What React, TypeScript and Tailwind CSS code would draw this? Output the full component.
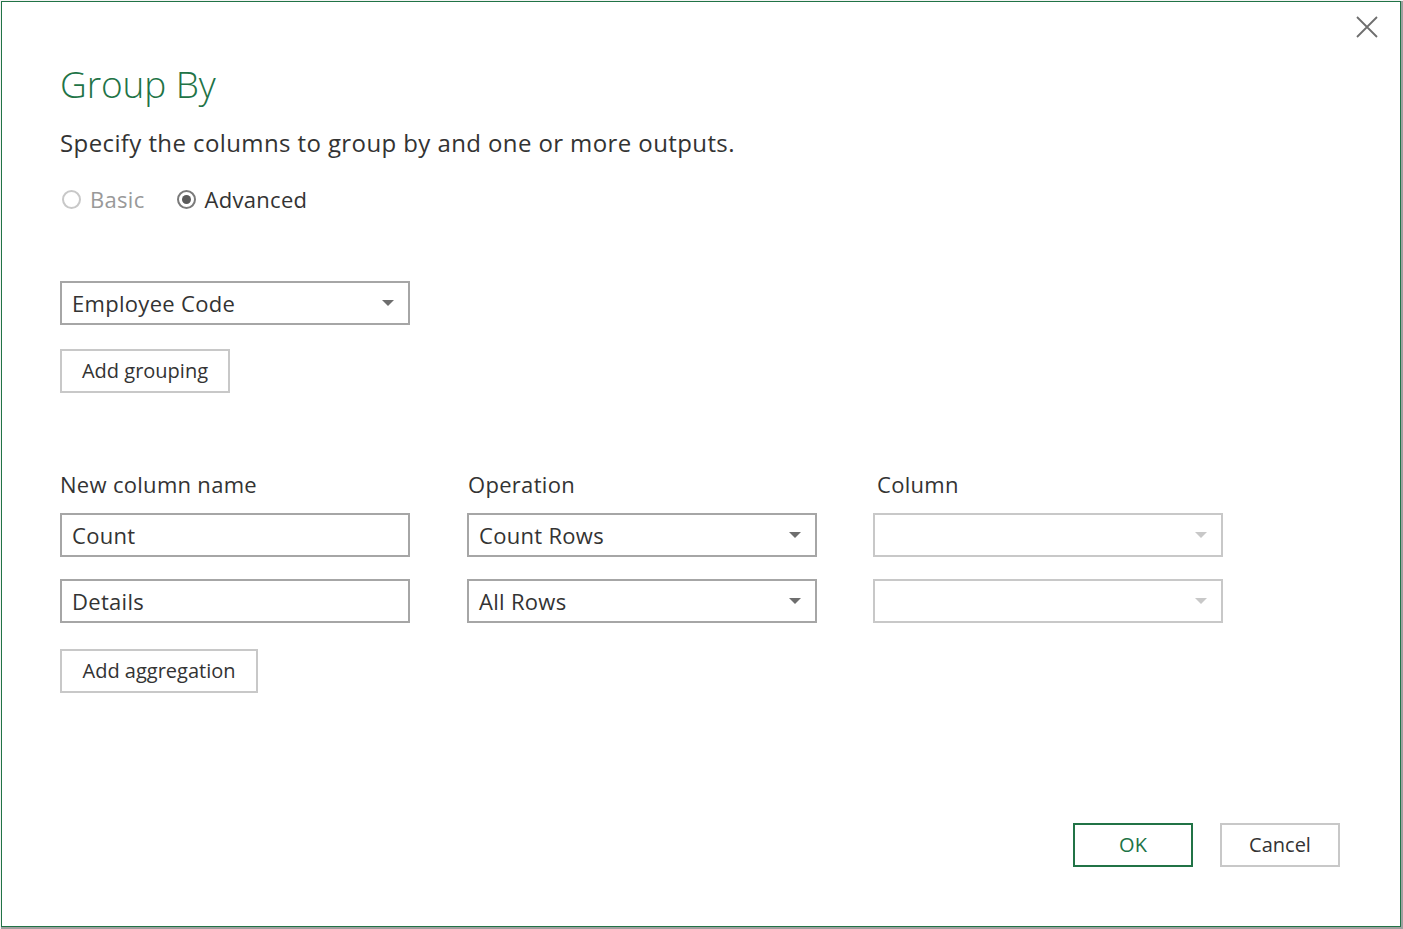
import React from 'react';

const font = { fontFamily: '"Open Sans", "Noto Sans", sans-serif' };

const Caret = ({ disabled }: { disabled?: boolean }) => (
  <svg width="12" height="6" viewBox="0 0 12 6" className="shrink-0">
    <path d="M0 0 L12 0 L6 6 Z" fill={disabled ? '#c8c8c8' : '#6e6e6e'} />
  </svg>
);

const Select = ({ value, disabled }: { value?: string; disabled?: boolean }) => (
  <div
    className={`w-[350px] h-[44px] border-2 ${disabled ? 'border-[#c8c8c8]' : 'border-[#a6a6a6]'} bg-white flex items-center justify-between pl-[10px] pr-[14px]`}
  >
    <span className="text-[22px] text-[#333] leading-none tracking-[0.3px]">{value}</span>
    <Caret disabled={disabled} />
  </div>
);

const TextBox = ({ value }: { value: string }) => (
  <div className="w-[350px] h-[44px] border-2 border-[#a6a6a6] bg-white flex items-center pl-[10px]">
    <span className="text-[22px] text-[#333] leading-none tracking-[0.3px]">{value}</span>
  </div>
);

const Button = ({ label, width }: { label: string; width: string }) => (
  <button className={`${width} h-[44px] border-2 border-[#c8c8c8] bg-white text-[20px] text-[#333] flex items-center justify-center`}>
    {label}
  </button>
);

export default function App() {
  return (
    <div className="w-[1403px] h-[929px] bg-[#f3f3f3] pl-[1px] pt-[1px]" style={font}>
      <div className="relative w-[1400px] h-[926px] bg-white border border-[#217346] shadow-[1px_1px_0_1px_#a0a0a0] pl-[58px] pt-[56px] flex flex-col">
        <button className="absolute right-[19px] top-[11px] w-[28px] h-[28px] flex items-center justify-center">
          <svg width="22" height="22" viewBox="0 0 22 22">
            <path d="M1 1 L21 21 M21 1 L1 21" stroke="#6e6e6e" strokeWidth="1.8" />
          </svg>
        </button>

        <h1 className="text-[37px] font-light text-[#217346] leading-[52px] tracking-[-0.1px]">Group By</h1>
        <p className="mt-[16px] text-[24px] text-[#333] leading-[34px] tracking-[0.4px]">Specify the columns to group by and one or more outputs.</p>

        <div className="mt-[24px] flex items-center h-[30px] text-[22px] tracking-[0.3px]">
          <span className="w-[19px] h-[19px] rounded-full border-2 border-[#c8c8c8] bg-white ml-[2px]" />
          <span className="ml-[9px] text-[#999]">Basic</span>
          <span className="ml-[32px] w-[19px] h-[19px] rounded-full border-2 border-[#7a7a7a] bg-white flex items-center justify-center">
            <span className="w-[9px] h-[9px] rounded-full bg-[#5a5a5a]" />
          </span>
          <span className="ml-[9px] text-[#333]">Advanced</span>
        </div>

        <div className="mt-[67px]">
          <Select value="Employee Code" />
        </div>
        <div className="mt-[24px]">
          <Button label="Add grouping" width="w-[170px]" />
        </div>

        <div className="mt-[76px] flex text-[22px] text-[#333] leading-[30px] tracking-[0.3px]">
          <div className="w-[350px]">New column name</div>
          <div className="w-[350px] ml-[57px] pl-[1px]">Operation</div>
          <div className="w-[350px] ml-[56px] pl-[4px]">Column</div>
        </div>

        <div className="mt-[14px] flex flex-col gap-[22px]">
          <div className="flex">
            <TextBox value="Count" />
            <div className="ml-[57px]"><Select value="Count Rows" /></div>
            <div className="ml-[56px]"><Select disabled /></div>
          </div>
          <div className="flex">
            <TextBox value="Details" />
            <div className="ml-[57px]"><Select value="All Rows" /></div>
            <div className="ml-[56px]"><Select disabled /></div>
          </div>
        </div>

        <div className="mt-[26px]">
          <Button label="Add aggregation" width="w-[198px]" />
        </div>

        <div className="mt-auto mb-[59px] mr-[60px] flex justify-end gap-[27px]">
          <button className="w-[120px] h-[44px] border-2 border-[#217346] bg-white text-[20px] text-[#217346]">OK</button>
          <Button label="Cancel" width="w-[120px]" />
        </div>
      </div>
    </div>
  );
}
